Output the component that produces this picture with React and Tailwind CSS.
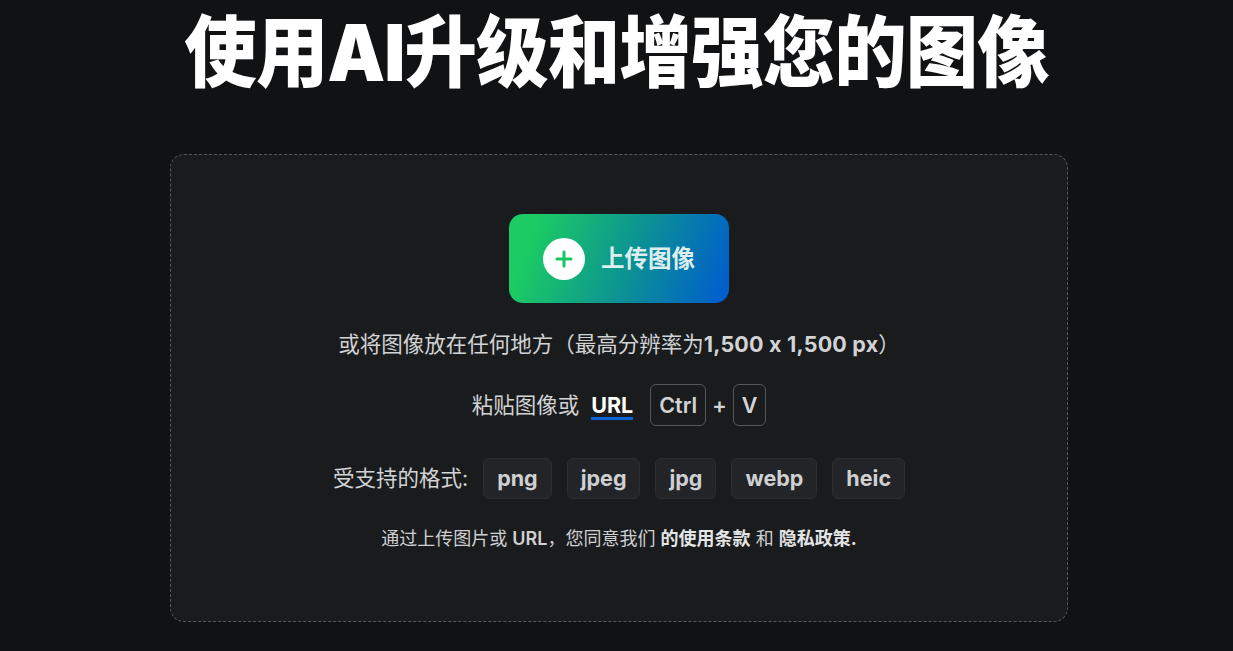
export default function App() {
  const font = { fontFamily: "Inter, 'Noto Sans CJK SC', sans-serif" };
  const formats = ["png", "jpeg", "jpg", "webp", "heic"];
  return (
    <div className="min-h-[651px] w-full bg-[#111214] overflow-hidden" style={font}>
      <h1 className="pt-[13px] text-center text-[78px] leading-[80px] font-black text-white tracking-[-1px] scale-x-[0.93] origin-[619px_0px]">
        使用AI升级和增强您的图像
      </h1>
      <div className="ml-[170px] mt-[61px] w-[898px] h-[468px] rounded-[14px] border border-dashed border-[#55575b] bg-[#1a1b1d] flex flex-col items-center pt-[59px]">
        <button className="w-[220px] h-[89px] rounded-[14px] bg-[linear-gradient(110deg,#1ccb63_12%,#0b8f97_58%,#005fcb_96%)] flex items-center justify-center gap-[16px]">
          <span className="w-[42px] h-[42px] rounded-full bg-white flex items-center justify-center">
            <svg width="20" height="20" viewBox="0 0 20 20">
              <path d="M10 3v14M3 10h14" stroke="#17c55e" strokeWidth="3" strokeLinecap="round" />
            </svg>
          </span>
          <span className="text-[23.5px] font-bold text-[#dcefee]">上传图像</span>
        </button>
        <p className="mt-[27px] text-[21.5px] leading-[28px] text-[#d2d3d5]">
          或将图像放在任何地方（最高分辨率为<span className="font-bold tracking-[0.2px]">1,500 x 1,500 px</span>）
        </p>
        <div className="mt-[26px] flex items-center text-[21.5px] text-[#d2d3d5] h-[42px]">
          <span>粘贴图像或</span>
          <span className="ml-[12px] font-bold text-white border-b-[3px] border-[#0a62d6] leading-[24px] pt-[3px]">URL</span>
          <span className="ml-[17px] h-[42px] px-[8px] rounded-[6px] border border-[#55575b] flex items-center font-semibold">Ctrl</span>
          <span className="mx-[6px] font-semibold">+</span>
          <span className="h-[42px] px-[8px] rounded-[6px] border border-[#55575b] flex items-center font-semibold">V</span>
        </div>
        <div className="mt-[32px] flex items-center text-[21.5px] text-[#d2d3d5]">
          <span className="mr-[15px]">受支持的格式:</span>
          <div className="flex gap-[15px]">
            {formats.map((f) => (
              <span key={f} className="h-[41px] px-[13px] rounded-[6px] bg-[#232427] border border-[#2c2d30] flex items-center font-bold text-[#cfd0d2]">
                {f}
              </span>
            ))}
          </div>
        </div>
        <p className="mt-[28px] text-[18px] leading-[24px] text-[#cfd0d2]">
          通过上传图片或 <span className="font-semibold">URL</span>，您同意我们 <span className="font-bold text-[#e4e5e6]">的使用条款</span> 和 <span className="font-bold text-[#e4e5e6]">隐私政策.</span>
        </p>
      </div>
    </div>
  );
}
